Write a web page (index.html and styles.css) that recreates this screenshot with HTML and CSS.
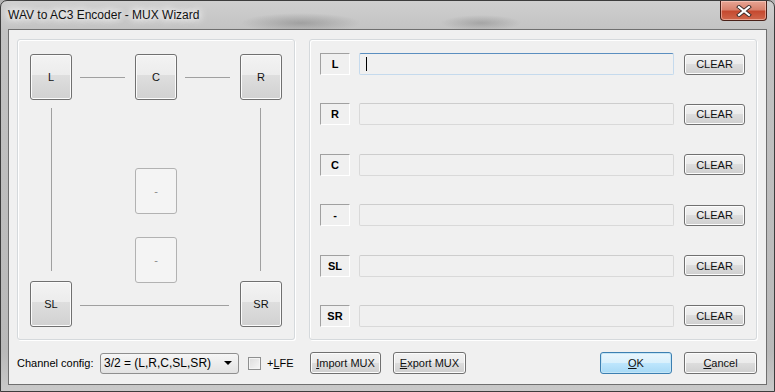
FILE: index.html
```html
<!DOCTYPE html>
<html lang="en">
<head>
	<meta charset="UTF-8">
	<title>WAV to AC3 Encoder - MUX Wizard</title>
	<link rel="stylesheet" href="styles.css">
</head>
<body>
	<div class="window">
		<div class="titlebar">
			<span class="title">WAV to AC3 Encoder - MUX Wizard</span>
			<button class="close-btn" title="Close">
				<svg width="16" height="12" viewBox="0 0 16 12">
					<path d="M3 2 L13 10 M13 2 L3 10" stroke="#3a2a28" stroke-width="4" stroke-linecap="square"/>
					<path d="M3 2 L13 10 M13 2 L3 10" stroke="#ffffff" stroke-width="2.2" stroke-linecap="square"/>
				</svg>
			</button>
		</div>

		<div class="client">
			<div class="groups">
				<!-- speaker layout -->
				<div class="group speaker-map">
					<span class="line h-line line-lc"></span>
					<span class="line h-line line-cr"></span>
					<span class="line v-line line-left"></span>
					<span class="line v-line line-right"></span>
					<span class="line h-line line-bottom"></span>

					<button class="speaker spk-l">L</button>
					<button class="speaker spk-c">C</button>
					<button class="speaker spk-r">R</button>
					<button class="speaker disabled spk-m1">-</button>
					<button class="speaker disabled spk-m2">-</button>
					<button class="speaker spk-sl">SL</button>
					<button class="speaker spk-sr">SR</button>
				</div>

				<!-- channel files -->
				<div class="group channels">
					<div class="channel-row">
						<span class="ch-label">L</span>
						<div class="field focused"><span class="caret"></span></div>
						<button class="btn clear-btn">CLEAR</button>
					</div>
					<div class="channel-row">
						<span class="ch-label">R</span>
						<div class="field"></div>
						<button class="btn clear-btn">CLEAR</button>
					</div>
					<div class="channel-row">
						<span class="ch-label">C</span>
						<div class="field"></div>
						<button class="btn clear-btn">CLEAR</button>
					</div>
					<div class="channel-row">
						<span class="ch-label">-</span>
						<div class="field"></div>
						<button class="btn clear-btn">CLEAR</button>
					</div>
					<div class="channel-row">
						<span class="ch-label">SL</span>
						<div class="field"></div>
						<button class="btn clear-btn">CLEAR</button>
					</div>
					<div class="channel-row">
						<span class="ch-label">SR</span>
						<div class="field"></div>
						<button class="btn clear-btn">CLEAR</button>
					</div>
				</div>
			</div>

			<div class="footer">
				<span class="config-label">Channel config:</span>
				<div class="combo">
					<span class="combo-text">3/2 = (L,R,C,SL,SR)</span>
					<span class="combo-arrow"></span>
				</div>
				<label class="lfe">
					<span class="checkbox"></span>
					<span>+<u>L</u>FE</span>
				</label>
				<button class="btn import-btn"><u>I</u>mport MUX</button>
				<button class="btn export-btn"><u>E</u>xport MUX</button>
				<button class="btn default-btn ok-btn"><u>O</u>K</button>
				<button class="btn cancel-btn"><u>C</u>ancel</button>
			</div>
		</div>
	</div>
</body>
</html>
```

FILE: styles.css
```css
* {
	box-sizing: border-box;
	margin: 0;
	padding: 0;
}

body {
	font-family: "Liberation Sans", Arial, sans-serif;
	font-size: 11px;
	color: #000;
	background: #b4b4b4;
}

button {
	font: inherit;
	color: inherit;
}

/* Aero frame */
.window {
	width: 775px;
	height: 392px;
	display: flex;
	flex-direction: column;
	padding: 0 7px 6px 7px;
	border: 1px solid #3c3c3c;
	border-radius: 7px 7px 0 0;
	background:
		radial-gradient(ellipse 60px 10px at 300px 22px, rgba(90,90,90,0.35), transparent),
		radial-gradient(ellipse 40px 8px at 480px 22px, rgba(90,90,90,0.3), transparent),
		linear-gradient(to bottom, #cfcfcf 0%, #c2c2c2 8%, #b9b9b9 90%, #c9c9c9 100%);
}

.titlebar {
	height: 28px;
	flex: none;
	display: flex;
	align-items: flex-start;
	justify-content: space-between;
}

.title {
	margin-top: 7px;
	font-size: 12px;
	color: #111;
	text-shadow: 0 0 6px #fff, 0 0 10px #fff, 0 0 12px #fff;
}

.close-btn {
	width: 47px;
	height: 20px;
	display: flex;
	align-items: center;
	justify-content: center;
	border: 1px solid #4a2018;
	border-top: none;
	border-radius: 0 0 4px 4px;
	background: linear-gradient(to bottom, #e7a594 0%, #d8826e 45%, #c54a30 55%, #d0674c 100%);
	box-shadow: inset 0 0 0 1px rgba(255,220,210,0.5);
}

.client {
	flex: 1;
	display: flex;
	flex-direction: column;
	border: 1px solid #6f6f6f;
	background: #f0f0f0;
}

.groups {
	display: flex;
	gap: 14px;
	padding: 9px 9px 0 8px;
}

.group {
	height: 301px;
	border: 1px solid #d5d9dc;
	border-radius: 3px;
	box-shadow: inset 1px 1px 0 #fff, 1px 1px 0 #fff;
}

/* Speaker diagram */
.speaker-map {
	position: relative;
	width: 278px;
}

.speaker {
	position: absolute;
	width: 42px;
	height: 46px;
	border: 1px solid #707070;
	border-radius: 3px;
	background: linear-gradient(to bottom, #f3f3f3 0%, #ececec 45%, #dedede 46%, #d1d1d1 100%);
	box-shadow: inset 0 0 0 1px #fbfbfb;
	font-size: 11px;
	color: #111;
}

.speaker.disabled {
	border-color: #b2b2b2;
	background: #f4f4f4;
	box-shadow: none;
	color: #8a8a8a;
}

.spk-l { left: 12px; top: 14px; }
.spk-c { left: 117px; top: 14px; }
.spk-r { left: 222px; top: 14px; }
.spk-m1 { left: 117px; top: 128px; }
.spk-m2 { left: 117px; top: 197px; }
.spk-sl { left: 12px; top: 241px; }
.spk-sr { left: 222px; top: 241px; }

.line {
	position: absolute;
	background: #a0a0a0;
}

.h-line { height: 1px; }
.v-line { width: 1px; }

.line-lc { left: 62px; top: 37px; width: 45px; }
.line-cr { left: 167px; top: 37px; width: 45px; }
.line-left { left: 33px; top: 68px; height: 163px; }
.line-right { left: 242px; top: 68px; height: 163px; }
.line-bottom { left: 62px; top: 265px; width: 149px; }

/* Channel rows */
.channels {
	width: 448px;
	display: flex;
	flex-direction: column;
	justify-content: space-between;
	padding: 13px 11px 12px 10px;
}

.channel-row {
	display: flex;
	align-items: center;
	height: 22px;
}

.ch-label {
	width: 30px;
	height: 22px;
	display: flex;
	align-items: center;
	justify-content: center;
	border: 1px solid;
	border-color: #a0a0a0 #ffffff #ffffff #a0a0a0;
	font-weight: bold;
}

.field {
	position: relative;
	width: 315px;
	height: 22px;
	margin-left: 9px;
	border: 1px solid #d9d9d9;
	border-top-color: #cdcdcd;
	border-radius: 2px;
	background: #f0f0f0;
}

.field.focused {
	border-color: #c5daed;
	border-top-color: #5b8fc0;
}

.caret {
	position: absolute;
	left: 6px;
	top: 3px;
	width: 1px;
	height: 14px;
	background: #000;
}

.btn {
	height: 22px;
	border: 1px solid #707070;
	border-radius: 3px;
	background: linear-gradient(to bottom, #f2f2f2 0%, #ebebeb 48%, #dddddd 50%, #cfcfcf 100%);
	box-shadow: inset 0 0 0 1px #fcfcfc;
	color: #111;
}

.clear-btn {
	width: 61px;
	height: 21px;
	margin-left: 10px;
}

/* Bottom bar */
.footer {
	display: flex;
	align-items: center;
	padding: 12px 9px 0 8px;
}

.config-label {
	width: 83px;
}

.combo {
	width: 139px;
	height: 21px;
	display: flex;
	align-items: center;
	justify-content: space-between;
	padding: 0 6px 0 3px;
	border: 1px solid #8f8f8f;
	border-radius: 3px;
	background: linear-gradient(to bottom, #f6f6f6 0%, #ececec 50%, #e2e2e2 100%);
	font-size: 12px;
}

.combo-arrow {
	width: 0;
	height: 0;
	border-left: 4px solid transparent;
	border-right: 4px solid transparent;
	border-top: 4px solid #000;
}

.lfe {
	display: flex;
	align-items: center;
	gap: 6px;
	margin-left: 9px;
	width: 62px;
	font-size: 11px;
}

.checkbox {
	width: 13px;
	height: 13px;
	border: 1px solid #8e8f8f;
	background: linear-gradient(135deg, #dcdcdc 0%, #f6f6f6 100%);
	box-shadow: inset 0 0 0 1px #f4f4f4;
}

.import-btn {
	width: 71px;
}

.export-btn {
	width: 73px;
	margin-left: 12px;
}

.ok-btn {
	width: 72px;
	margin-left: auto;
}

.default-btn {
	border-color: #3c7fb1;
	background: linear-gradient(to bottom, #eaf6fd 0%, #d9f0fc 48%, #bee6fd 50%, #a7d9f5 100%);
	box-shadow: inset 0 0 0 1px #c4e5f6;
}

.cancel-btn {
	width: 73px;
	margin-left: 12px;
}
```
